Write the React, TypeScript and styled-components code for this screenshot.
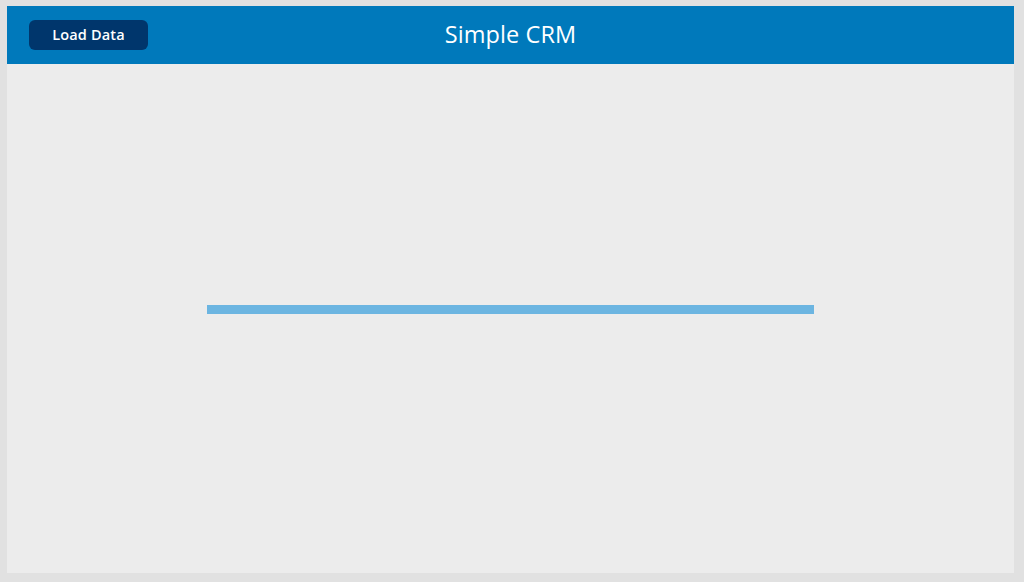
import styled, { createGlobalStyle } from 'styled-components';

const GlobalStyle = createGlobalStyle`
    html, body {
        margin: 0;
        padding: 0;
        background-color: #e1e1e1;
        font-family: "Open Sans", "Noto Sans", sans-serif;
    }
`
const Frame = styled.div`
    width: 1024px;
    height: 582px;
    box-sizing: border-box;
    padding: 6px 10px 9px 7px;
    display: flex;
`
const Screen = styled.div`
    flex: 1;
    display: flex;
    flex-direction: column;
    background-color: #ececec;
`
const Header = styled.header`
    height: 58px;
    flex-shrink: 0;
    display: grid;
    grid-template-columns: 1fr auto 1fr;
    align-items: center;
    padding: 0 22px;
    background-color: #0079bb;
`
const LoadButton = styled.button`
    justify-self: start;
    width: 119px;
    height: 30px;
    border: none;
    border-radius: 6px;
    background-color: #00366c;
    color: #ffffff;
    font-family: "Open Sans", "Noto Sans", sans-serif;
    font-size: 14.5px;
    font-weight: 600;
    letter-spacing: 0.15px;
    cursor: pointer;
    padding: 0 0 2px;
`
const Title = styled.h1`
    margin: 0 0 2px 0;
    color: #ffffff;
    font-size: 23.5px;
    font-weight: 400;
    letter-spacing: 0.1px;
`
const Body = styled.main`
    flex: 1;
    display: flex;
    align-items: center;
    justify-content: flex-start;
    padding: 0 0 19px 200px;
`
const ProgressBar = styled.div`
    width: 607px;
    height: 9px;
    background-color: #6cb5e1;
`

function App() {
    return (
        <>
            <GlobalStyle />
            <Frame>
                <Screen>
                    <Header>
                        <LoadButton>Load Data</LoadButton>
                        <Title>Simple CRM</Title>
                        <div />
                    </Header>
                    <Body>
                        <ProgressBar />
                    </Body>
                </Screen>
            </Frame>
        </>
    )
}

export default App;
